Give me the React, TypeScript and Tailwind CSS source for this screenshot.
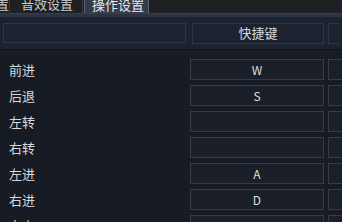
const rows = [
  { name: "前进", key: "W" },
  { name: "后退", key: "S" },
  { name: "左转", key: "" },
  { name: "右转", key: "" },
  { name: "左进", key: "A" },
  { name: "右进", key: "D" },
  { name: "向上", key: "" },
]

export default function App() {
  return (
    <div
      className="w-[342px] h-[222px] overflow-hidden bg-[#161b24] text-[#d6d9dc]"
      style={{ fontFamily: '"Noto Sans CJK SC", "Noto Sans", sans-serif' }}
    >
      {/* Tabs */}
      <div className="h-[13px] overflow-hidden bg-[#1e2023] flex items-start">
        <div className="-mt-[5px] flex h-[18px] text-[13px] leading-[18px]">
          <div className="w-[14px] -ml-[4px] text-[#c9cacb] border-r border-[#34373b]">置</div>
          <div className="w-[73px] pl-[11px] text-[#c9cacb] border-r border-[#3a3d42]">音效设置</div>
          <div className="w-[65px] ml-[1px] pl-[7px] bg-[#353c48] border-l border-t border-r border-[#5a6475] text-[#e4e6e8]">
            操作设置
          </div>
        </div>
      </div>
      <div className="h-[4px] bg-[#2a3444] border-t border-[#35404f]" />

      {/* Header */}
      <div className="h-[33px] bg-[#1b2230] flex items-center gap-[4px] px-[3px] border-b border-[#11151c]">
        <div className="w-[183px] h-[20px] border border-[#2c3645]" />
        <div className="w-[132px] ml-[2px] h-[21px] border border-[#2d3747] flex items-center justify-center text-[13px]">
          快捷键
        </div>
        <div className="flex-1 h-[21px] border border-[#2d3747] border-r-0" />
      </div>

      {/* Rows */}
      <div className="flex flex-col gap-[5px] pt-[9px]">
        {rows.map((r) => (
          <div key={r.name} className="flex items-center h-[21px]">
            <div className="w-[190px] pl-[9px] text-[13px] leading-[21px]">{r.name}</div>
            <div className="w-[134px] h-[21px] bg-[#1a1f28] border border-[#363b44] flex items-center justify-center text-[12px] text-[#dcdfe2]">
              {r.key}
            </div>
            <div className="flex-1 ml-[4px] h-[21px] bg-[#1a1f28] border border-[#363b44] border-r-0" />
          </div>
        ))}
      </div>
    </div>
  )
}
